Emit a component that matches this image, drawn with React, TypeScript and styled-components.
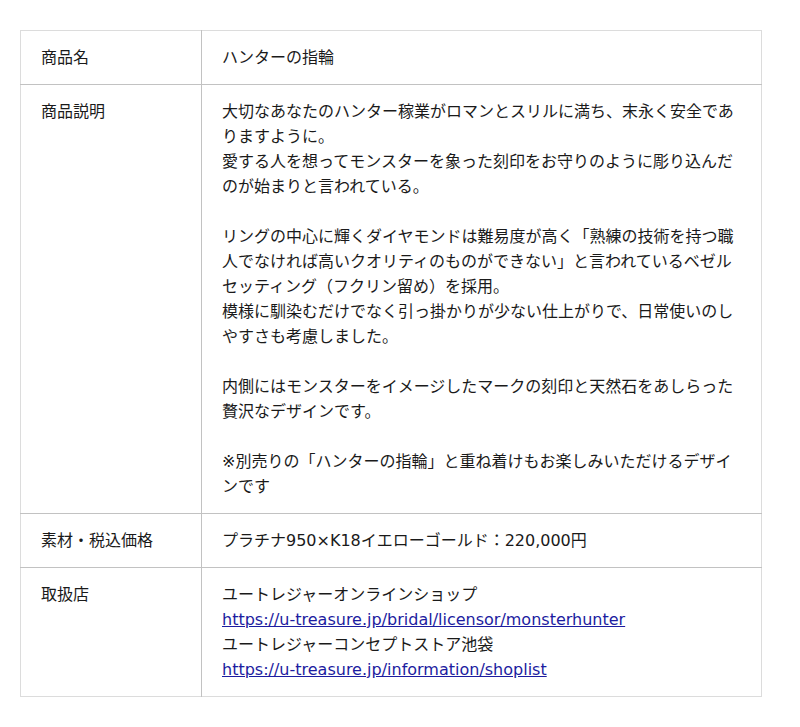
import styled, { createGlobalStyle } from 'styled-components';

const GlobalStyle = createGlobalStyle`
  body {
    margin: 0;
    background: #fff;
    font-family: "DejaVu Sans", "Noto Sans CJK JP", sans-serif;
    color: #1a1a1a;
  }
`;

const Page = styled.div`
  padding: 30px 20px;
`;

const SpecTable = styled.table`
  width: 742px;
  border-collapse: collapse;
  border: 1px solid #dcdcdc;
  font-size: 16px;
  line-height: 25px;
`;

const Row = styled.tr`
  border-bottom: 1px solid #c2c2c2;

  &:last-child {
    border-bottom: 1px solid #dcdcdc;
  }
`;

const Label = styled.th`
  width: 140px;
  padding: 14px 20px;
  text-align: left;
  vertical-align: top;
  font-weight: normal;
  border-right: 1px solid #c2c2c2;
`;

const Value = styled.td`
  padding: 14px 20px;
  vertical-align: top;
`;

const Para = styled.p`
  margin: 0;

  & + & {
    margin-top: 25px;
  }
`;

const Link = styled.a`
  color: #1c1ca0;
  text-decoration: underline;
`;

export default function App() {
  return (
    <>
      <GlobalStyle />
      <Page>
        <SpecTable>
          <tbody>
            <Row>
              <Label>商品名</Label>
              <Value>ハンターの指輪</Value>
            </Row>
            <Row>
              <Label>商品説明</Label>
              <Value>
                <Para>
                  大切なあなたのハンター稼業がロマンとスリルに満ち、末永く安全でありますように。
                  <br />
                  愛する人を想ってモンスターを象った刻印をお守りのように彫り込んだのが始まりと言われている。
                </Para>
                <Para>
                  リングの中心に輝くダイヤモンドは難易度が高く「熟練の技術を持つ職人でなければ高いクオリティのものができない」と言われているベゼルセッティング（フクリン留め）を採用。
                  <br />
                  模様に馴染むだけでなく引っ掛かりが少ない仕上がりで、日常使いのしやすさも考慮しました。
                </Para>
                <Para>
                  内側にはモンスターをイメージしたマークの刻印と天然石をあしらった贅沢なデザインです。
                </Para>
                <Para>
                  ※別売りの「ハンターの指輪」と重ね着けもお楽しみいただけるデザインです
                </Para>
              </Value>
            </Row>
            <Row>
              <Label>素材・税込価格</Label>
              <Value>プラチナ950×K18イエローゴールド：220,000円</Value>
            </Row>
            <Row>
              <Label>取扱店</Label>
              <Value>
                ユートレジャーオンラインショップ
                <br />
                <Link href="https://u-treasure.jp/bridal/licensor/monsterhunter">
                  https://u-treasure.jp/bridal/licensor/monsterhunter
                </Link>
                <br />
                ユートレジャーコンセプトストア池袋
                <br />
                <Link href="https://u-treasure.jp/information/shoplist">
                  https://u-treasure.jp/information/shoplist
                </Link>
              </Value>
            </Row>
          </tbody>
        </SpecTable>
      </Page>
    </>
  );
}
